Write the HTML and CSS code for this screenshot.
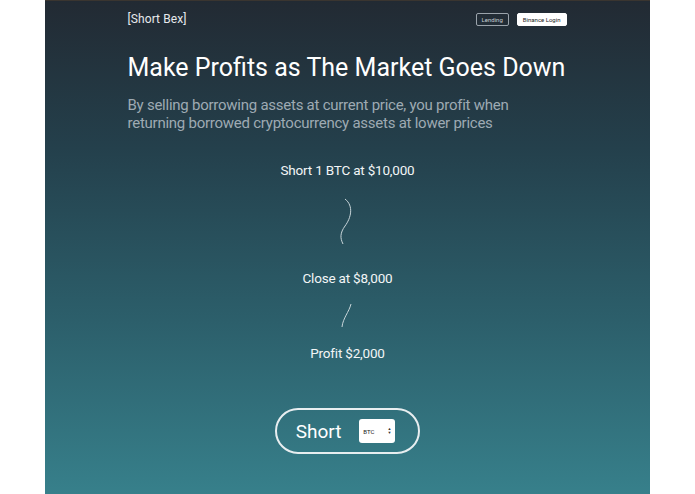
FILE: index.html
```html
<!DOCTYPE html>
<html lang="en">
<head>
  <meta charset="UTF-8">
  <title>Short Bex</title>
  <meta name="viewport" content="width=device-width, initial-scale=1">
  <link rel="stylesheet" href="styles.css">
</head>
<body>
  <div class="page">
    <div class="content">
      <div class="nav">
        <div class="brand">[Short Bex]</div>
        <div class="nav-links">
          <a class="nav-btn outline" href="#">Lending</a>
          <a class="nav-btn solid" href="#">Binance Login</a>
        </div>
      </div>
      <h1>Make Profits as The Market Goes Down</h1>
      <p class="lead">By selling borrowing assets at current price, you profit when returning borrowed cryptocurrency assets at lower prices</p>

      <div class="steps">
        <div class="step">Short 1 BTC at $10,000</div>
        <svg class="wave long" width="20" height="48" viewBox="0 0 20 48">
          <path d="M7 1 C16 8, 13 20, 7 28 C2 35, 2 40, 5 46" fill="none" stroke="#c9d6da" stroke-width="1"/>
        </svg>
        <div class="step">Close at $8,000</div>
        <svg class="wave short" width="20" height="26" viewBox="0 0 20 26">
          <path d="M13 1 C11 9, 5 15, 4 24" fill="none" stroke="#c9d6da" stroke-width="1"/>
        </svg>
        <div class="step">Profit $2,000</div>
      </div>

      <div class="action">
        <div class="short-btn">
          <span>Short</span>
          <div class="coin">BTC <span class="arrows">&#9650;<br>&#9660;</span></div>
        </div>
      </div>
    </div>
  </div>
</body>
</html>
```

FILE: styles.css
```css
body { margin:0; padding:0; background:#fff; font-family: Roboto, "Noto Sans", sans-serif; }
.page { width:605px; height:494px; margin:0 auto; background:linear-gradient(to bottom, #222a33 0%, #24404c 30%, #2c5f6b 65%, #37808b 100%); border-top:1px solid #3a3530; box-sizing:border-box; color:#fff; }
.content { width:440px; margin:0 auto; }
.nav { display:flex; justify-content:space-between; align-items:center; padding-top:10px; height:16px; }
.brand { font-size:12px; color:#e6e9ec; letter-spacing:0.1px; }
.nav-links { display:flex; gap:8px; margin-right:1px; }
.nav-btn { font-size:6px; text-decoration:none; padding:0 5px; height:11px; line-height:11px; border-radius:2px; }
.nav-btn.outline { color:#c7ccd2; border:1px solid #9aa3ab; }
.nav-btn.solid { color:#222; background:#fff; border:1px solid #fff; }
h1 { font-weight:400; font-size:25px; margin:25px 0 0; line-height:32px; color:#fff; white-space:nowrap; }
.lead { font-size:15px; letter-spacing:-0.25px; line-height:18px; color:#9eaab3; margin:12px 0 0; width:400px; }
.steps { display:flex; flex-direction:column; align-items:center; margin-top:30px; }
.step { font-size:13.5px; letter-spacing:-0.2px; color:#f2f5f6; line-height:16px; }
.wave.long { margin:20px 0 24px; }
.wave.short { margin:17px 0 16px; }
.action { display:flex; justify-content:center; margin-top:47px; }
.short-btn { display:flex; align-items:center; gap:18px; height:42px; padding:0 23px 0 19px; border:2px solid #e8eef0; border-radius:24px; }
.short-btn span { font-size:19px; color:#fff; }
.coin { display:flex; align-items:center; justify-content:space-between; width:36px; height:24px; box-sizing:border-box; padding:0 4px; background:#fff; border-radius:3px; color:#222; font-size:6px; }
.coin .arrows { font-size:4px; line-height:4px; color:#333; }
```
